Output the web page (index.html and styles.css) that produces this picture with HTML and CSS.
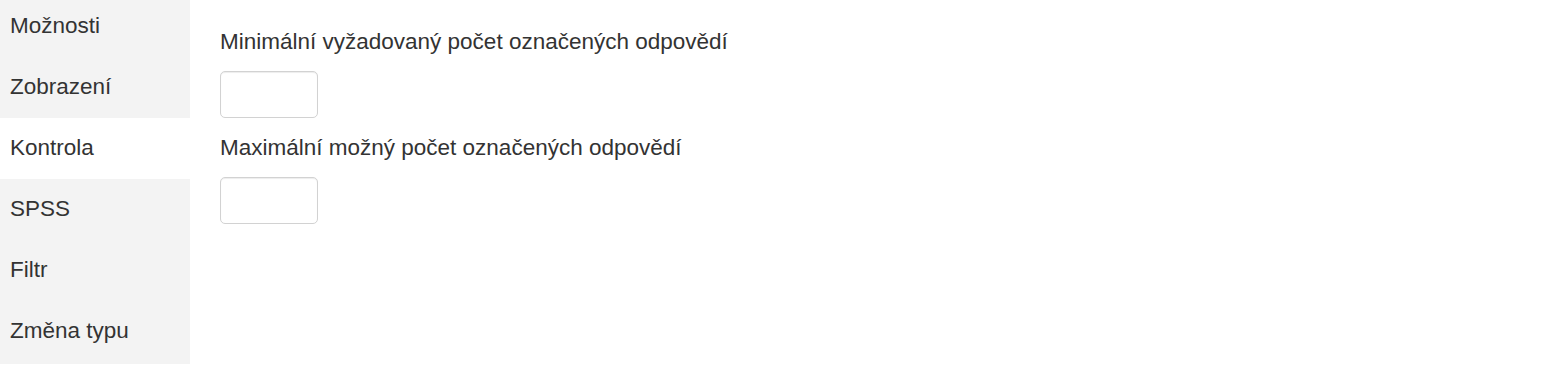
FILE: index.html
```html
<!DOCTYPE html>
<html lang="cs">
<head>
    <meta charset="UTF-8">
    <meta name="viewport" content="width=device-width, initial-scale=1.0">
    <title>Nastavení otázky</title>
    <link rel="stylesheet" href="styles.css">
</head>
<body>
    <div class="layout">
        <ul class="tabs">
            <li class="tab">Možnosti</li>
            <li class="tab">Zobrazení</li>
            <li class="tab active">Kontrola</li>
            <li class="tab">SPSS</li>
            <li class="tab">Filtr</li>
            <li class="tab">Změna typu</li>
        </ul>

        <div class="panel">
            <div class="form-group">
                <label for="minChecked">Minimální vyžadovaný počet označených odpovědí</label>
                <input type="text" id="minChecked" class="form-control">
            </div>
            <div class="form-group">
                <label for="maxChecked">Maximální možný počet označených odpovědí</label>
                <input type="text" id="maxChecked" class="form-control">
            </div>
        </div>
    </div>
</body>
</html>
```

FILE: styles.css
```css
/* Base */
:root {
    --text-color: #333;
    --tab-bg: #f3f3f3;
    --border-color: #d2d2d2;
}

body {
    margin: 0;
    padding: 0;
    font-family: "Liberation Sans", Arial, Helvetica, sans-serif;
    font-size: 22.5px;
    color: var(--text-color);
    background-color: #fff;
}

.layout {
    display: flex;
    align-items: flex-start;
}

/* Side tabs */
.tabs {
    list-style: none;
    margin: -4px 0 0 0;
    padding: 0 0 2px 0;
    width: 190px;
    flex-shrink: 0;
    background-color: var(--tab-bg);
}

.tab {
    height: 61px;
    line-height: 60px;
    padding-left: 10px;
    background-color: var(--tab-bg);
    white-space: nowrap;
}

.tab.active {
    background-color: #fff;
}

/* Content panel */
.panel {
    flex: 1;
    padding: 26px 0 0 30px;
}

.form-group {
    margin-bottom: 14px;
}

.form-group label {
    display: block;
    line-height: 32px;
    margin-bottom: 13px;
}

.form-control {
    display: block;
    box-sizing: border-box;
    width: 98px;
    height: 47px;
    margin: 0;
    padding: 8px 12px;
    font: inherit;
    color: var(--text-color);
    background-color: #fff;
    border: 1px solid var(--border-color);
    border-radius: 5px;
    box-shadow: inset 0 1px 1px rgba(0, 0, 0, 0.075);
}
```
